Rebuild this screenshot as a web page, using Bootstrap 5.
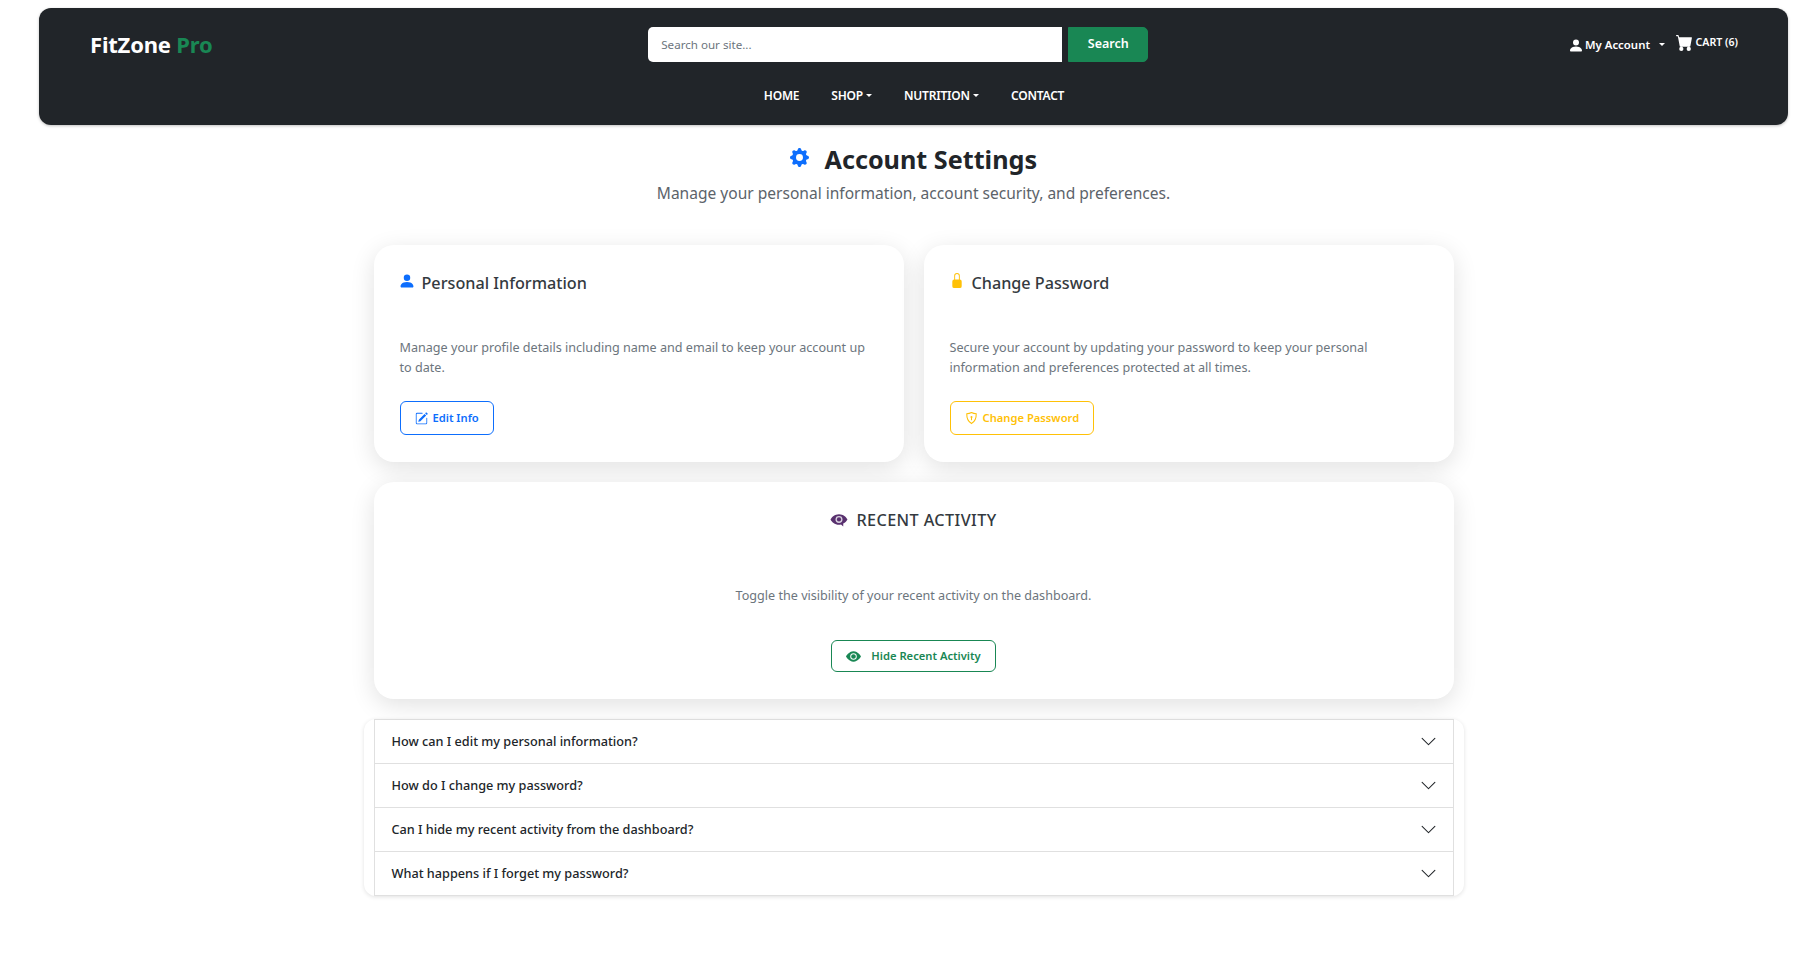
<!DOCTYPE html>
<html lang="en">

<head>
  <meta charset="UTF-8">
  <meta name="viewport" content="width=device-width, initial-scale=1.0">
  <title>Account Settings - FitZone Pro</title>
  <link href="https://cdn.jsdelivr.net/npm/bootstrap@5.3.2/dist/css/bootstrap.min.css" rel="stylesheet">

  <style>
    body {
      font-family: "Noto Sans", "Open Sans", sans-serif;
      background-color: #fff;
      color: #212529;
    }

    /* page is slightly off-centre in the original */
    .page-wrap {
      padding: 8px 29px 60px 39px;
    }

    /* navbar */
    .top-bar {
      display: block;
      padding: 19px 50px 0 51px;
      height: 117px;
      border-radius: 12px;
      background-color: #212529;
      box-shadow: 0 1px 3px rgba(0, 0, 0, .25);
    }

    .top-bar .navbar-brand {
      padding: 0;
      margin: 0 14px 0 0;
      font-size: 22px;
      font-weight: 700;
      line-height: 35px;
      letter-spacing: -.2px;
      color: #fff;
    }

    .brand-pro {
      color: #198754;
    }

    .site-search {
      width: 500px;
      gap: 6px;
    }

    .site-search .form-control {
      height: 35px;
      padding: 0 13px;
      font-size: 11.6px;
      border: 0;
      border-radius: 5px 0 0 5px;
    }

    .site-search .form-control::placeholder {
      color: #6c757d;
    }

    .site-search .btn {
      flex: 0 0 80px;
      height: 35px;
      padding: 0;
      font-size: 12.5px;
      font-weight: 600;
      border-radius: 0 5px 5px 0;
    }

    .acct-links {
      width: 168px;
      font-size: 11.4px;
      font-weight: 600;
      color: #fff;
    }

    .acct-links a {
      color: #fff;
      text-decoration: none;
      white-space: nowrap;
    }

    .acct-links .dropdown-toggle::after {
      margin-left: 6px;
      border-top-width: .3em;
      border-right-width: .3em;
      border-left-width: .3em;
    }

    .acct-links .cart-text {
      margin-top: -3px;
      font-size: 10.6px;
    }

    .cart-ico {
      margin-right: 2px;
    }

    .main-links {
      margin-top: 19px;
      gap: 0;
    }

    .main-links .nav-link {
      padding: 6px 16px;
      font-size: 12px;
      font-weight: 600;
      color: #fff;
      text-transform: uppercase;
      letter-spacing: -.2px;
    }

    .main-links .dropdown-toggle::after {
      margin-left: 3px;
      border-top-width: .25em;
      border-right-width: .25em;
      border-left-width: .25em;
    }

    /* page heading */
    .page-head {
      margin-top: 19px;
    }

    .page-title {
      margin: 0;
      font-size: 25.2px;
      font-weight: 700;
      line-height: 30px;
      color: #212529;
    }

    .page-title svg {
      margin-right: 9px;
      vertical-align: 2px;
    }

    .page-sub {
      margin: 8px 0 0;
      font-size: 15.55px;
      line-height: 22px;
      color: #5c636a;
    }

    /* cards */
    .settings-col {
      width: 1080px;
      margin: 41px auto 0;
    }

    .settings-grid {
      display: grid;
      grid-template-columns: 1fr 1fr;
      gap: 20px;
    }

    .setting-box {
      padding: 26px;
      height: 217px;
      border: 0;
      border-radius: 20px;
      box-shadow: 0 6px 24px rgba(0, 0, 0, .12);
    }

    .setting-box h5 {
      margin: 0;
      font-size: 16.2px;
      font-weight: 500;
      line-height: 24px;
      color: #343a40;
    }

    .setting-box h5 svg {
      margin-right: 8px;
      vertical-align: 1px;
    }

    .setting-box p {
      margin: 43px 0 0;
      padding-right: 8px;
      font-size: 12.6px;
      line-height: 20px;
      color: #6c757d;
    }

    .setting-box .btn {
      margin-top: 23px;
      height: 34px;
      padding: 0 14px;
      font-size: 11.2px;
      font-weight: 600;
      line-height: 32px;
      border-radius: 6px;
      display: inline-flex;
      align-items: center;
      gap: 5px;
    }

    .btn-amber {
      color: #ffc107;
      border-color: #ffc107;
    }

    .wide-box {
      grid-column: 1 / 3;
      text-align: center;
    }

    .wide-box h5 {
      letter-spacing: .4px;
    }

    .wide-box h5 svg {
      vertical-align: -2px;
    }

    .wide-box .btn {
      margin-top: 34px;
      height: 32px;
      gap: 10px;
    }

    .wide-box p {
      margin-top: 54px;
      padding-right: 0;
    }

    /* faq */
    .faq-wrap {
      width: 1100px;
      margin: 20px auto 0;
      padding: 0 10px;
      border-radius: 12px;
      box-shadow: 0 1px 4px rgba(0, 0, 0, .12);
      --bs-accordion-border-color: #e0e0e0;
      --bs-accordion-border-radius: 0;
      --bs-accordion-inner-border-radius: 0;
      --bs-accordion-btn-icon-width: 17px;
      --bs-accordion-btn-padding-x: 16px;
      --bs-accordion-btn-padding-y: 0;
    }

    .faq-wrap .accordion-button {
      height: 43px;
      padding-left: 17px;
      font-size: 12.7px;
      font-weight: 500;
      color: #212529;
    }
  </style>
</head>

<body>
  <div class="page-wrap">
    <!-- navbar -->
    <nav class="navbar navbar-dark top-bar">
      <div class="d-flex justify-content-between align-items-center">
        <a class="navbar-brand" href="#">FitZone <span class="brand-pro">Pro</span></a>
        <form class="d-flex site-search">
          <input class="form-control" type="search" placeholder="Search our site...">
          <button class="btn btn-success" type="button">Search</button>
        </form>
        <div class="d-flex align-items-center justify-content-between acct-links">
          <a href="#" class="dropdown-toggle">
            <svg width="12" height="13" viewBox="2 1.5 12 13" fill="currentColor"><path d="M3 14s-1 0-1-1 1-4 6-4 6 3 6 4-1 1-1 1H3Zm5-6a3 3 0 1 0 0-6 3 3 0 0 0 0 6Z"/></svg>
            My Account
          </a>
          <a href="#" class="d-flex align-items-center cart-text">
            <svg class="cart-ico" width="19" height="17" viewBox="0 0 16 16" fill="currentColor"><path d="M0 1.5A.5.5 0 0 1 .5 1H2a.5.5 0 0 1 .485.379L2.89 3H14.5a.5.5 0 0 1 .491.592l-1.5 8A.5.5 0 0 1 13 12H4a.5.5 0 0 1-.491-.408L2.01 3.607 1.61 2H.5a.5.5 0 0 1-.5-.5zM5 12a2 2 0 1 0 0 4 2 2 0 0 0 0-4zm7 0a2 2 0 1 0 0 4 2 2 0 0 0 0-4z"/></svg>
            CART (6)
          </a>
        </div>
      </div>
      <ul class="nav justify-content-center main-links">
        <li class="nav-item"><a class="nav-link" href="#">Home</a></li>
        <li class="nav-item"><a class="nav-link dropdown-toggle" href="#">Shop</a></li>
        <li class="nav-item"><a class="nav-link dropdown-toggle" href="#">Nutrition</a></li>
        <li class="nav-item"><a class="nav-link" href="#">Contact</a></li>
      </ul>
    </nav>

    <!-- heading -->
    <div class="text-center page-head">
      <h2 class="page-title">
        <svg width="19" height="19" viewBox="0 0 16 16" fill="#0d6efd"><path d="M9.405 1.05c-.413-1.4-2.397-1.4-2.81 0l-.1.34a1.464 1.464 0 0 1-2.105.872l-.31-.17c-1.283-.698-2.686.705-1.987 1.987l.169.311c.446.82.023 1.841-.872 2.105l-.34.1c-1.4.413-1.4 2.397 0 2.81l.34.1a1.464 1.464 0 0 1 .872 2.105l-.17.31c-.698 1.283.705 2.686 1.987 1.987l.311-.169a1.464 1.464 0 0 1 2.105.872l.1.34c.413 1.4 2.397 1.4 2.81 0l.1-.34a1.464 1.464 0 0 1 2.105-.872l.31.17c1.283.698 2.686-.705 1.987-1.987l-.169-.311a1.464 1.464 0 0 1 .872-2.105l.34-.1c1.4-.413 1.4-2.397 0-2.81l-.34-.1a1.464 1.464 0 0 1-.872-2.105l.17-.31c.698-1.283-.705-2.686-1.987-1.987l-.311.169a1.464 1.464 0 0 1-2.105-.872l-.1-.34zM8 10.93a2.929 2.929 0 1 1 0-5.86 2.929 2.929 0 0 1 0 5.858z"/></svg>
        Account Settings
      </h2>
      <p class="page-sub">Manage your personal information, account security, and preferences.</p>
    </div>

    <div class="settings-col">
      <div class="settings-grid">
        <div class="card setting-box">
          <h5>
            <svg width="14" height="14" viewBox="2 1.5 12 13" fill="#0d6efd"><path d="M3 14s-1 0-1-1 1-4 6-4 6 3 6 4-1 1-1 1H3Zm5-6a3 3 0 1 0 0-6 3 3 0 0 0 0 6Z"/></svg>Personal Information
          </h5>
          <p>Manage your profile details including name and email to keep your account up to date.</p>
          <div>
            <a href="#" class="btn btn-outline-primary">
              <svg width="13" height="13" viewBox="0 0 16 16" fill="currentColor"><path d="M15.502 1.94a.5.5 0 0 1 0 .706L14.459 3.69l-2-2L13.502.646a.5.5 0 0 1 .707 0l1.293 1.293zm-1.75 2.456-2-2L4.939 9.21a.5.5 0 0 0-.121.196l-.805 2.414a.25.25 0 0 0 .316.316l2.414-.805a.5.5 0 0 0 .196-.12l6.813-6.814z"/><path d="M1 13.5A1.5 1.5 0 0 0 2.5 15h11a1.5 1.5 0 0 0 1.5-1.5v-6a.5.5 0 0 0-1 0v6a.5.5 0 0 1-.5.5h-11a.5.5 0 0 1-.5-.5v-11a.5.5 0 0 1 .5-.5H9a.5.5 0 0 0 0-1H2.5A1.5 1.5 0 0 0 1 2.5v11z"/></svg>
              Edit Info
            </a>
          </div>
        </div>

        <div class="card setting-box">
          <h5>
            <svg width="14" height="15" viewBox="3 0 10 16" fill="#ffc107"><path d="M8 1a2 2 0 0 1 2 2v4H6V3a2 2 0 0 1 2-2zm3 6V3a3 3 0 0 0-6 0v4a2 2 0 0 0-2 2v5a2 2 0 0 0 2 2h6a2 2 0 0 0 2-2V9a2 2 0 0 0-2-2z"/></svg>Change Password
          </h5>
          <p>Secure your account by updating your password to keep your personal information and preferences protected at all times.</p>
          <div>
            <a href="#" class="btn btn-amber">
              <svg width="13" height="14" viewBox="0 0 16 16" fill="none" stroke="currentColor" stroke-width="1.3"><path d="M8 1.2c1.8.9 3.7 1.4 5.8 1.6.2 5.3-1.4 9.6-5.8 12-4.4-2.4-6-6.700-5.800-12C4.300 2.600 6.200 2.100 8 1.200z"/><circle cx="8" cy="6.800" r="1.200" fill="currentColor" stroke="none"/><path d="M8 7.500v2.700" stroke-linecap="round"/></svg>
              Change Password
            </a>
          </div>
        </div>

        <div class="card setting-box wide-box">
          <h5>
            <svg width="18" height="16" viewBox="0 0 17 15"><path fill="#59316f" d="M8.500 2C4.500 2 1.500 4.800.5 7c1 2.200 4 5 8 5 .6 0 1.300-.1 1.900-.2l2.100 1.900v-2.800C14.500 9.800 15.800 8.400 16.500 7 15.500 4.800 12.500 2 8.500 2z"/><circle cx="8.500" cy="7" r="3.300" fill="#d9d2df"/><circle cx="8.500" cy="7" r="2" fill="#59316f"/></svg>RECENT ACTIVITY
          </h5>
          <p>Toggle the visibility of your recent activity on the dashboard.</p>
          <div>
            <a href="#" class="btn btn-outline-success">
              <svg width="15" height="15" viewBox="0 0 16 16" fill="currentColor"><path d="M10.500 8a2.500 2.500 0 1 1-5 0 2.500 2.500 0 0 1 5 0z"/><path d="M0 8s3-5.500 8-5.500S16 8 16 8s-3 5.500-8 5.500S0 8 0 8zm8 3.500a3.500 3.500 0 1 0 0-7 3.500 3.500 0 0 0 0 7z"/></svg>
              Hide Recent Activity
            </a>
          </div>
        </div>
      </div>
    </div>

    <!-- faq -->
    <div class="accordion faq-wrap" id="faqList">
      <div class="accordion-item">
        <h2 class="accordion-header"><button class="accordion-button collapsed" type="button" data-bs-toggle="collapse" data-bs-target="#faq1">How can I edit my personal information?</button></h2>
        <div id="faq1" class="accordion-collapse collapse" data-bs-parent="#faqList">
          <div class="accordion-body">Click Edit Info in the Personal Information card.</div>
        </div>
      </div>
      <div class="accordion-item">
        <h2 class="accordion-header"><button class="accordion-button collapsed" type="button" data-bs-toggle="collapse" data-bs-target="#faq2">How do I change my password?</button></h2>
        <div id="faq2" class="accordion-collapse collapse" data-bs-parent="#faqList">
          <div class="accordion-body">Click Change Password and follow the steps.</div>
        </div>
      </div>
      <div class="accordion-item">
        <h2 class="accordion-header"><button class="accordion-button collapsed" type="button" data-bs-toggle="collapse" data-bs-target="#faq3">Can I hide my recent activity from the dashboard?</button></h2>
        <div id="faq3" class="accordion-collapse collapse" data-bs-parent="#faqList">
          <div class="accordion-body">Yes, use the Hide Recent Activity button.</div>
        </div>
      </div>
      <div class="accordion-item">
        <h2 class="accordion-header"><button class="accordion-button collapsed" type="button" data-bs-toggle="collapse" data-bs-target="#faq4">What happens if I forget my password?</button></h2>
        <div id="faq4" class="accordion-collapse collapse" data-bs-parent="#faqList">
          <div class="accordion-body">You can reset it from the login page.</div>
        </div>
      </div>
    </div>
  </div>

  <script src="https://cdn.jsdelivr.net/npm/bootstrap@5.3.2/dist/js/bootstrap.bundle.min.js"></script>
</body>

</html>
